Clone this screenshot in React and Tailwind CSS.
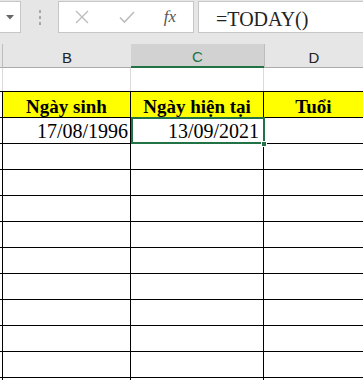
export default function App() {
  const emptyRows = Array.from({ length: 10 });
  return (
    <div className="w-[363px] h-[380px] overflow-hidden bg-white font-['Liberation_Sans',sans-serif]">
      {/* Formula bar */}
      <div className="flex h-[44px] bg-[#e6e6e6] pt-[1px] items-start">
        <div className="w-[21px] h-[32px] bg-white border-y border-r border-[#c6c6c6] flex items-center justify-center">
          <svg width="8" height="5" viewBox="0 0 8 5">
            <path d="M0 0 L8 0 L4 4.5 Z" fill="#666" />
          </svg>
        </div>
        <div className="w-[37px] h-[32px] flex flex-col items-center justify-center gap-[3px]">
          <div className="w-[2px] h-[3px] bg-[#a8a8a8]" />
          <div className="w-[2px] h-[3px] bg-[#a8a8a8]" />
          <div className="w-[2px] h-[3px] bg-[#a8a8a8]" />
        </div>
        <div className="w-[136px] h-[32px] bg-white border border-[#c6c6c6] flex items-center">
          <div className="w-[45px] flex justify-center">
            <svg width="14" height="14" viewBox="0 0 14 14">
              <path d="M1 1 L13 13 M13 1 L1 13" stroke="#bdbdbd" strokeWidth="1.4" fill="none" />
            </svg>
          </div>
          <div className="w-[46px] flex justify-center">
            <svg width="16" height="14" viewBox="0 0 16 14">
              <path d="M1 7.5 L5.5 12 L15 2" stroke="#bdbdbd" strokeWidth="1.6" fill="none" />
            </svg>
          </div>
          <div className="w-[40px] flex justify-center">
            <span className="font-['Liberation_Serif',serif] italic text-[17px] leading-none text-[#555] pb-[2px]">
              fx
            </span>
          </div>
        </div>
        <div className="ml-[4px] flex-1 h-[32px] bg-white border-y border-l border-[#c6c6c6] pl-[17px] flex items-center">
          <span className="font-['Liberation_Serif',serif] text-[20px] leading-none text-[#222] pt-[3px]">
            =TODAY()
          </span>
        </div>
      </div>

      {/* Column headers */}
      <div className="flex h-[24px] bg-[#e6e6e6] text-[15px] leading-none">
        <div className="w-[2px] h-[24px] border-b border-[#ababab]" />
        <div className="w-[129px] h-[24px] border-l border-b border-[#bdbdbd] border-b-[#ababab] flex items-center justify-center text-[#222] pt-[3px]">
          B
        </div>
        <div className="w-[133px] h-[24px] bg-[#d2d2d2] border-b-2 border-[#217346] flex items-center justify-center text-[#217346] pt-[3px]">
          C
        </div>
        <div className="flex-1 h-[24px] border-l border-b border-[#bdbdbd] border-b-[#ababab] flex items-center justify-center text-[#222] pt-[3px]">
          D
        </div>
      </div>

      {/* Empty row 1 */}
      <div className="flex h-[23px]">
        <div className="w-[2px]" />
        <div className="w-[128px] border-l border-[#dadada]" />
        <div className="w-[133px] border-l border-[#dadada]" />
        <div className="flex-1 border-l border-[#dadada]" />
      </div>

      {/* Table */}
      <div className="border-t border-black font-['Liberation_Serif',serif] text-black">
        <div className="flex h-[26px] border-b border-black">
          <div className="w-[2px]" />
          <div className="w-[128px] border-l border-black bg-[#ffff00] flex items-center justify-center font-bold text-[19px] leading-none pt-[4px]">
            Ngày sinh
          </div>
          <div className="w-[133px] border-l border-black bg-[#ffff00] flex items-center justify-center font-bold text-[19px] leading-none pt-[4px]">
            Ngày hiện tại
          </div>
          <div className="flex-1 border-l border-black bg-[#ffff00] flex items-center justify-center font-bold text-[19px] leading-none pt-[4px]">
            Tuổi
          </div>
        </div>
        <div className="flex h-[26px] border-b border-black">
          <div className="w-[2px]" />
          <div className="w-[128px] border-l border-black flex items-center justify-end pr-[2px] text-[20px] leading-none">
            17/08/1996
          </div>
          <div className="relative w-[133px] border-l border-black flex items-center justify-end pr-[4px] text-[20px] leading-none">
            13/09/2021
            <div className="absolute left-0 top-[-1px] w-[134px] h-[27px] border-2 border-[#217346]" />
            <div className="absolute right-[-4px] bottom-[-4px] w-[6px] h-[6px] bg-[#217346] border border-white" />
          </div>
          <div className="flex-1 border-l border-black" />
        </div>
        {emptyRows.map((_, i) => (
          <div key={i} className="flex h-[26px] shrink-0 border-b border-black">
            <div className="w-[2px]" />
            <div className="w-[128px] border-l border-black" />
            <div className="w-[133px] border-l border-black" />
            <div className="flex-1 border-l border-black" />
          </div>
        ))}
      </div>
    </div>
  );
}
